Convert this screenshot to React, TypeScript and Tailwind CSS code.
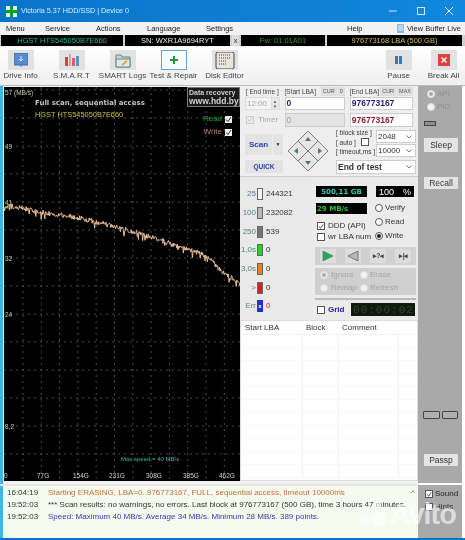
import React from 'react';

const FONT = "font-['Liberation_Sans',Arial,sans-serif]";
const WIDE = "font-['DejaVu_Sans',Verdana,sans-serif]";

// Write-speed trace: anchors read off the reference, noise is seeded so every run is the same
const ANCHORS: [number, number][] = [
  [0, 122], [4, 118], [36, 125], [76, 131], [116, 141], [136, 147], [156, 153],
  [176, 160], [196, 166], [206, 172], [216, 183], [226, 190], [236, 198],
];

function traceBase(x: number) {
  for (let i = 1; i < ANCHORS.length; i++) {
    const [x0, y0] = ANCHORS[i - 1];
    const [x1, y1] = ANCHORS[i];
    if (x <= x1) return y0 + ((y1 - y0) * (x - x0)) / (x1 - x0);
  }
  return 198;
}

function buildTrace() {
  let seed = 41;
  const pts: string[] = [];
  for (let x = 0; x <= 236; x += 0.6) {
    seed = (seed * 16807) % 2147483647;
    const n = (seed % 1000) / 1000 - 0.5;
    const spike = seed % 17 === 0 ? 5 : 0;
    pts.push(`${x.toFixed(1)},${(traceBase(x) + n * 5 + spike).toFixed(1)}`);
  }
  return pts.join(' ');
}

const Y_LABELS = [['57 (MB/s)', 1], ['49', 55], ['41', 111], ['32', 167], ['24', 223], ['8,2', 335]] as const;
const X_LABELS = [['0', 0], ['77G', 33], ['154G', 69], ['231G', 105], ['308G', 142], ['385G', 179], ['462G', 215]] as const;

function Chart() {
  const hLines = Array.from({ length: 14 }, (_, i) => 3 + i * 28);
  const vLines = Array.from({ length: 12 }, (_, i) => 19 + i * 18.3);
  return (
    <div className="relative h-[394px] w-[236px] shrink-0 bg-black">
      <svg width="236" height="394" className="absolute inset-0">
        {hLines.map(y => (
          <line key={y} x1="0" x2="236" y1={y} y2={y} stroke="#4c4c4c" strokeWidth="1" strokeDasharray="2 4" />
        ))}
        {vLines.map(x => (
          <line key={x} y1="0" y2="394" x1={x} x2={x} stroke="#4c4c4c" strokeWidth="1" strokeDasharray="2 4" />
        ))}
        <polyline points={buildTrace()} fill="none" stroke="#e6bc98" strokeWidth="1" />
      </svg>
      {Y_LABELS.map(([t, top]) => (
        <span key={t} className="absolute left-[1px] text-[6.5px] leading-[9px] text-[#c9c9a8]" style={{ top }}>{t}</span>
      ))}
      {X_LABELS.map(([t, left]) => (
        <span key={t} className="absolute bottom-[1px] text-[6.5px] leading-[9px] text-[#d8d8c0]" style={{ left }}>{t}</span>
      ))}
      <div className={`absolute left-[31px] top-[11px] whitespace-nowrap text-[7px] font-bold leading-[11px] text-[#c4c4c4] ${WIDE}`}>Full scan, sequential access</div>
      <div className="absolute left-[31px] top-[22px] whitespace-nowrap text-[7.4px] leading-[11px] text-[#cfc53e]">HGST HTS545050B7E660</div>
      <div className="absolute right-0 top-0 h-[20px] w-[53px] whitespace-nowrap border border-[#777] bg-[#1a1a1a] pl-[1px] font-bold leading-[9px] text-[#cfcfcf]">
        <div className="text-[7px]">Data recovery</div>
        <div className="text-[8.5px]">www.hdd.by</div>
      </div>
      <div className="absolute right-[8px] top-[27px] flex h-[10px] items-center gap-[3px] text-[8px] text-[#19a52b]">
        Read <ChartCheck />
      </div>
      <div className="absolute right-[8px] top-[40px] flex h-[10px] items-center gap-[3px] text-[8px] text-[#b5835f]">
        Write <ChartCheck />
      </div>
      <div className="absolute bottom-[17px] left-[117px] whitespace-nowrap text-[6px] text-[#38b6b0]">Max speed = 40 MB/s</div>
    </div>
  );
}

function ChartCheck() {
  return (
    <span className="flex h-[7px] w-[7px] items-center justify-center bg-[#eee]">
      <svg width="7" height="7" viewBox="0 0 7 7"><path d="M1 3.5 3 5.5 6 1" fill="none" stroke="#333" strokeWidth="1" /></svg>
    </span>
  );
}

function Check({ on = false, muted = false }: { on?: boolean; muted?: boolean }) {
  return (
    <span className={`flex h-[8px] w-[8px] shrink-0 items-center justify-center border ${muted ? 'border-[#ccc] bg-[#eee]' : 'border-[#555] bg-white'}`}>
      {on && <svg width="7" height="7" viewBox="0 0 7 7"><path d="M1 3.5 3 5.5 6 1" fill="none" stroke={muted ? '#bbb' : '#333'} strokeWidth="1" /></svg>}
    </span>
  );
}

function Radio({ on = false, muted = false }: { on?: boolean; muted?: boolean }) {
  return (
    <span className={`flex h-[8px] w-[8px] shrink-0 items-center justify-center rounded-full border ${muted ? 'border-[#ddd] bg-[#f3f3f3]' : 'border-[#555] bg-white'}`}>
      {on && <span className={`h-[4px] w-[4px] rounded-full ${muted ? 'bg-[#aaa]' : 'bg-[#222]'}`} />}
    </span>
  );
}

function TitleBar() {
  return (
    <div className="flex h-[22px] items-center bg-gradient-to-r from-[#0a74c9] to-[#1187de] pl-[6px] text-white">
      <svg width="11" height="11" viewBox="0 0 11 11">
        <rect width="11" height="11" fill="#dfeee0" />
        <path d="M4 0h3v4h4v3H7v4H4V7H0V4h4z" fill="#109a2c" />
      </svg>
      <span className="ml-[4px] whitespace-nowrap text-[7.2px] text-[#d8f0ff]">Victoria 5.37 HDD/SSD | Device 0</span>
      <div className="ml-auto mr-[12px] flex items-center gap-[20px]">
        <svg width="8" height="8" viewBox="0 0 8 8"><path d="M0 4h8" stroke="#cfe7fa" /></svg>
        <svg width="8" height="8" viewBox="0 0 8 8"><rect x=".5" y=".5" width="7" height="7" fill="none" stroke="#cfe7fa" /></svg>
        <svg width="8" height="8" viewBox="0 0 8 8"><path d="M0 0 8 8M8 0 0 8" stroke="#e8f4fd" /></svg>
      </div>
    </div>
  );
}

function MenuBar() {
  return (
    <div className="flex h-[13px] items-center whitespace-nowrap bg-[#f2f2f2] text-[7.5px] text-[#222]">
      <span className="ml-[6px] w-[39px]">Menu</span>
      <span className="w-[51px]">Service</span>
      <span className="w-[51px]">Actions</span>
      <span className="w-[59px]">Language</span>
      <span className="w-[141px]">Settings</span>
      <span className="w-[50px]">Help</span>
      <svg width="7" height="9" viewBox="0 0 7 9">
        <rect width="7" height="9" fill="#8db9dc" />
        <path d="M1 2h5M1 4h5M1 6h5" stroke="#e4f0f8" />
      </svg>
      <span className="ml-[3px]">View Buffer Live</span>
    </div>
  );
}

function DriveBar() {
  return (
    <div className="flex h-[11px] gap-[2px] whitespace-nowrap bg-[#cfcfcf] pl-[1px] pr-[3px] text-[7.5px] leading-[11px]">
      <div className="w-[122px] bg-black text-center text-[#20b89a]">HGST HTS545050B7E660</div>
      <div className="w-[105px] bg-black text-center text-[#e6e6e6]">SN: WXR1A9694RYT</div>
      <div className="w-[7px] bg-[#ddd] text-center text-[#333]">x</div>
      <div className="w-[84px] bg-black text-center text-[#2f9a2a]">Fw: 01.01A01</div>
      <div className="flex-1 bg-black text-center text-[#c6c04c]">976773168 LBA (500 GB)</div>
    </div>
  );
}

function ToolIcon({ name }: { name: string }) {
  if (name === 'info') return (
    <svg width="14" height="14" viewBox="0 0 14 14">
      <rect width="14" height="12" fill="#5b8bd0" stroke="#3f6bb0" />
      <path d="M7 3v5M5 6l2 2 2-2" stroke="#dbe9f8" fill="none" />
      <path d="M5 12h4l-2 2z" fill="#5b8bd0" />
    </svg>
  );
  if (name === 'smart') return (
    <svg width="16" height="14" viewBox="0 0 16 14">
      <rect x="1" y="4" width="3" height="9" fill="#d8433c" />
      <rect x="5" y="1" width="2" height="12" fill="#c9a0c0" />
      <rect x="8" y="5" width="3" height="8" fill="#e0605a" />
      <rect x="12" y="3" width="3" height="10" fill="#5b8fd6" />
    </svg>
  );
  if (name === 'logs') return (
    <svg width="16" height="15" viewBox="0 0 16 15">
      <path d="M1 2h5l1 2h8v10H1z" fill="#cdd9c9" stroke="#5d8a94" />
      <path d="M1 6h14v8H1z" fill="#dfeae6" stroke="#5d8a94" />
      <path d="M7 12l5-4" stroke="#e6a532" strokeWidth="2" />
    </svg>
  );
  if (name === 'disk') return (
    <svg width="20" height="17" viewBox="0 0 20 17">
      <rect x="1" y="0" width="18" height="17" rx="2" fill="#e8e4dc" stroke="#444" />
      <path d="M4 3h12M4 6h12M4 9h8M4 12h8" stroke="#444" strokeDasharray="1 1" />
    </svg>
  );
  if (name === 'pause') return (
    <svg width="7" height="8" viewBox="0 0 7 8">
      <rect width="3" height="8" fill="#3a78b8" />
      <rect x="4" width="3" height="8" fill="#3a78b8" />
    </svg>
  );
  return (
    <svg width="12" height="12" viewBox="0 0 12 12">
      <rect width="12" height="12" fill="#d9453d" />
      <path d="M3.500 3.500l5 5M8.500 3.500l-5 5" stroke="#fff" strokeWidth="1.4" />
    </svg>
  );
}

function ToolButton({ label, icon, active = false }: { label: string; icon: string; active?: boolean }) {
  return (
    <div className="flex w-[51px] shrink-0 flex-col items-center">
      <div className={`flex h-[20px] w-[26px] items-center justify-center ${active ? 'border border-[#63a4d4] bg-white' : 'bg-[#e2e2e2]'}`}>
        {icon === 'repair' ? (
          <svg width="8" height="8" viewBox="0 0 8 8"><path d="M3 0h2v3h3v2H5v3H3V5H0V3h3z" fill="#1f9a3a" /></svg>
        ) : <ToolIcon name={icon} />}
      </div>
      <span className="mt-[1px] whitespace-nowrap text-[8px] leading-[10px] text-[#444]">{label}</span>
    </div>
  );
}

function Toolbar() {
  return (
    <div className="flex h-[39px] items-start border-b border-[#bbb] bg-gradient-to-b from-white to-[#efefef] pt-[3px]">
      <div className="-ml-[5px]"><ToolButton label="Drive Info" icon="info" /></div>
      <ToolButton label="S.M.A.R.T" icon="smart" />
      <ToolButton label="SMART Logs" icon="logs" />
      <ToolButton label="Test & Repair" icon="repair" active />
      <ToolButton label="Disk Editor" icon="disk" />
      <div className="ml-[123px]"><ToolButton label="Pause" icon="pause" /></div>
      <div className="-ml-[6px]"><ToolButton label="Break All" icon="break" /></div>
    </div>
  );
}

function TinyTab({ children }: { children: React.ReactNode }) {
  return <span className="border border-[#ddd] bg-[#e0e0e0] px-[1px] text-[5.5px] leading-[7px] text-[#555]">{children}</span>;
}

function Arrows() {
  const cell = (cx: number, cy: number, tri: string) => (
    <g key={`${cx}-${cy}`}>
      <polygon points={`${cx},${cy - 10} ${cx + 10},${cy} ${cx},${cy + 10} ${cx - 10},${cy}`} fill="#e6e6e6" stroke="#666" strokeWidth="0.8" />
      <polygon points={tri} fill="#4f7d58" />
    </g>
  );
  return (
    <svg width="42" height="42" viewBox="0 0 42 42" className="shrink-0">
      {cell(21, 11, '21,7 24,11 18,11')}
      {cell(31, 21, '35,21 31,18 31,24')}
      {cell(21, 31, '21,35 24,31 18,31')}
      {cell(11, 21, '7,21 11,18 11,24')}
    </svg>
  );
}

function Select({ label, bold = false, className = '' }: { label: string; bold?: boolean; className?: string }) {
  return (
    <div className={`flex items-center justify-between border border-[#ccc] bg-white pl-[1px] pr-[3px] text-[#333] ${bold ? 'text-[8.5px] font-bold' : 'text-[8px]'} ${className}`}>
      {label}
      <svg width="6" height="4" viewBox="0 0 6 4"><path d="M.5.5 3 3 5.500.5" fill="none" stroke="#777" /></svg>
    </div>
  );
}

function ScanPanel() {
  return (
    <div className="h-[91px] border-b border-[#ccc] bg-[#eeeeee] px-[5px] pt-[1px] text-[#444]">
      <div className="flex gap-[5px]">
        <div className="w-[35px]">
          <div className="h-[9px] whitespace-nowrap text-center text-[6.5px] leading-[9px]">[ End time ]</div>
          <div className="mt-[1px] flex h-[13px] items-center justify-between border border-[#ddd] bg-[#f4f4f4] pl-[1px] text-[8px] text-[#aaa]">
            12:00
            <span className="flex h-full w-[8px] flex-col items-center justify-center border-l border-[#ddd] bg-[#e8e8e8] text-[4.5px] leading-[5px] text-[#666]"><span>▲</span><span>▼</span></span>
          </div>
          <div className="mt-[3px] flex h-[13px] items-center gap-[4px] pl-[1px] text-[8px] text-[#aaa]"><Check on muted /> Timer</div>
        </div>
        <div className="w-[61px]">
          <div className="flex h-[9px] items-center gap-[1px] whitespace-nowrap text-[6.5px]"><span className="mr-auto">[Start LBA]</span><TinyTab>CUR</TinyTab><TinyTab>0</TinyTab></div>
          <div className="mt-[1px] flex h-[13px] items-center border border-[#ccc] bg-white pl-[1px] text-[8.5px] font-bold text-[#1e1e7a]">0</div>
          <div className="mt-[3px] flex h-[14px] items-center border border-[#ccc] bg-[#e4e4e4] pl-[1px] text-[8.5px] text-[#999]">0</div>
        </div>
        <div className="w-[64px]">
          <div className="flex h-[9px] items-center gap-[1px] whitespace-nowrap text-[6.5px]"><span className="mr-auto">[End LBA]</span><TinyTab>CUR</TinyTab><TinyTab>MAX</TinyTab></div>
          <div className="mt-[1px] flex h-[13px] items-center border border-[#ccc] bg-white pl-[1px] text-[8.5px] font-bold text-[#1e1e7a]">976773167</div>
          <div className="mt-[3px] flex h-[14px] items-center border border-[#ccc] bg-white pl-[1px] text-[8.5px] font-bold text-[#8c1c2c]">976773167</div>
        </div>
      </div>
      <div className="mt-[3px] flex">
        <div className="w-[38px] shrink-0 pt-[4px]">
          <div className="flex gap-[1px]">
            <div className="flex h-[21px] w-[27px] items-center justify-center bg-[#e3e3e3] text-[8px] font-bold text-[#2a3fb0]">Scan</div>
            <div className="flex h-[21px] w-[10px] items-center justify-center bg-[#e3e3e3] text-[5px] text-[#222]">▼</div>
          </div>
          <div className="mt-[5px] flex h-[13px] items-center justify-center bg-[#e3e3e3] text-[6.5px] font-bold text-[#2a3fb0]">QUICK</div>
        </div>
        <div className="ml-[4px]"><Arrows /></div>
        <div className="ml-[7px] w-[80px] shrink-0">
          <div className="flex">
            <div className="-mt-[2px] w-[39px] shrink-0 text-[6.5px] leading-[9.5px] text-[#333]">
              <div className="whitespace-nowrap">[ block size ]</div>
              <div className="flex h-[9.5px] items-center gap-[5px] whitespace-nowrap">[ auto ] <Check /></div>
              <div className="whitespace-nowrap">[ timeout,ms ]</div>
            </div>
            <div className="ml-auto w-[40px] shrink-0">
              <Select label="2048" className="h-[13px]" />
              <Select label="10000" className="mt-[1px] h-[13px]" />
            </div>
          </div>
          <Select label="End of test" bold className="mt-[3px] h-[14px]" />
        </div>
      </div>
    </div>
  );
}

const STATS = [
  ['25', '#f4f4f4', '244321', '#4a7a90'],
  ['100', '#b8b8b8', '232082', '#4a8a90'],
  ['250', '#777', '539', '#4f8a70'],
  ['1,0s', '#22d322', '0', '#4a8a70'],
  ['3,0s', '#e8822a', '0', '#4a8a70'],
  ['>', '#d81e1e', '0', '#777'],
] as const;

function StatsColumn() {
  return (
    <div className="w-[72px] shrink-0 pt-[8px] text-[8px]">
      {STATS.map(([label, color, val, tone]) => (
        <div key={label} className="flex h-[18.7px] items-center">
          <span className="w-[16px] whitespace-nowrap text-right" style={{ color: tone }}>{label}</span>
          <span className="ml-[1px] h-[12px] w-[6px] border border-[#666]" style={{ background: color }} />
          <span className="ml-[3px] text-[#333]">{val}</span>
        </div>
      ))}
      <div className="flex h-[18.7px] items-center">
        <span className="w-[16px] text-right text-[#5a8a90]">Err</span>
        <span className="ml-[1px] flex h-[12px] w-[6px] items-center justify-center bg-[#2233cc] text-[6px] font-bold leading-none text-white">x</span>
        <span className="ml-[3px] text-[#e02020]">0</span>
      </div>
    </div>
  );
}

function TransportButton({ children }: { children: React.ReactNode }) {
  return <div className="flex h-[14px] w-[16px] items-center justify-center bg-[#dcdcdc]">{children}</div>;
}

function ControlColumn() {
  return (
    <div className="flex-1 bg-[#ebebeb] pl-[3px] pr-[2px] pt-[9px] text-[8px] leading-[10px] text-[#333]">
      <div className="flex h-[58px]">
        <div className="w-[57px] shrink-0 pl-[1px]">
          <div className={`flex h-[11px] w-[51px] items-center justify-center bg-black text-[7px] font-bold text-[#35c7b5] ${WIDE}`}>500,11 GB</div>
          <div className={`mt-[6px] flex h-[11px] w-[51px] items-center bg-black pl-[1px] text-[7px] font-bold text-[#2fc02f] ${WIDE}`}>29 MB/s</div>
          <div className="mt-[7px] flex h-[10px] items-center gap-[3px] whitespace-nowrap pl-[1px]"><Check on /> DDD (API)</div>
          <div className="mt-[1px] flex h-[10px] items-center gap-[3px] whitespace-nowrap pl-[1px]"><Check /> wr LBA num</div>
        </div>
        <div className="ml-[3px] flex-1">
          <div className="ml-[1px] flex h-[11px] w-[38px] items-center justify-between bg-black px-[3px] text-[9px] text-white"><span>100</span><span>%</span></div>
          <div className="mt-[6px] flex h-[10px] items-center gap-[2px]"><Radio /> Verify</div>
          <div className="mt-[4px] flex h-[10px] items-center gap-[2px]"><Radio /> Read</div>
          <div className="mt-[4px] flex h-[10px] items-center gap-[2px]"><Radio on /> Write</div>
        </div>
      </div>
      <div className="mt-[3px] flex h-[18px] items-center justify-around bg-[#d0d0d0]">
        <TransportButton><svg width="12" height="10" viewBox="0 0 12 10"><path d="M1 0 11 5 1 10z" fill="#25b04a" stroke="#555" strokeWidth=".5" /></svg></TransportButton>
        <TransportButton><svg width="12" height="10" viewBox="0 0 12 10"><path d="M11 0 1 5 11 10z" fill="#b8b8b8" stroke="#555" strokeWidth=".7" /></svg></TransportButton>
        <TransportButton><span className="whitespace-nowrap text-[7px] font-bold tracking-[-0.5px] text-[#444]">▸?◂</span></TransportButton>
        <TransportButton><span className="whitespace-nowrap text-[7px] font-bold tracking-[-0.5px] text-[#444]">▸|◂</span></TransportButton>
      </div>
      <div className="mt-[3px] grid h-[27px] grid-cols-[40px_1fr] content-center gap-y-[3px] bg-[#cfcfcf] pl-[5px] text-[8px] text-[#a4a4a4]">
        <div className="flex h-[10px] items-center gap-[3px]"><Radio on muted /> Ignore</div>
        <div className="flex h-[10px] items-center gap-[2px]"><Radio muted /> Erase</div>
        <div className="flex h-[10px] items-center gap-[3px]"><Radio muted /> Remap</div>
        <div className="flex h-[10px] items-center gap-[2px]"><Radio muted /> Refresh</div>
      </div>
      <div className="mt-[3px] h-[2px] bg-[#bbb]" />
      <div className="mt-[3px] flex items-center pl-[2px]">
        <Check />
        <span className="ml-[3px] text-[8px] font-bold text-[#23238c]">Grid</span>
        <div className="ml-[7px] flex h-[13px] w-[64px] items-center justify-center bg-[#101a10] font-['Liberation_Mono',monospace] text-[11px] tracking-[1px] text-[#2e4a2a]">00:00:02</div>
      </div>
    </div>
  );
}

function ResultTable() {
  const rows = Array.from({ length: 11 }, (_, i) => i);
  return (
    <div className="mb-[3px] flex-1 overflow-hidden border border-[#ddd] bg-white">
      <div className="grid h-[14px] grid-cols-[62px_36px_60px_1fr] items-center border-b border-[#f2f2f2] text-[8px] text-[#333]">
        <span className="pl-[4px]">Start LBA</span>
        <span className="pl-[3px]">Block</span>
        <span className="pl-[3px]">Comment</span>
      </div>
      {rows.map(r => (
        <div key={r} className="grid h-[13px] grid-cols-[62px_36px_60px_1fr] border-b border-[#f9f9f9]">
          <span className="border-r border-[#f2f2f2]" />
          <span className="border-r border-[#f2f2f2]" />
          <span className="border-r border-[#f2f2f2]" />
        </div>
      ))}
    </div>
  );
}

function LogPanel() {
  return (
    <div className="relative flex-1 border-l-[3px] border-[#3fb4ee] bg-[#f6faef] pl-[4px] pt-[1px] text-[8px] leading-[12px]">
      {[
        ['16:04:19', 'Starting ERASING, LBA=0..976773167, FULL, sequential access, timeout 10000ms', 'text-[#c0703c]'],
        ['19:52:03', '*** Scan results: no warnings, no errors. Last block at 976773167 (500 GB), time 3 hours 47 minutes.', 'text-[#333]'],
        ['19:52:03', 'Speed: Maximum 40 MB/s. Average 34 MB/s. Minimum 28 MB/s. 389 points.', 'text-[#3535b5]'],
      ].map(([time, msg, tone]) => (
        <div key={msg} className="flex whitespace-nowrap">
          <span className="w-[41px] shrink-0 text-[#333]">{time}</span>
          <span className={`${tone} w-[362px] overflow-hidden`}>{msg}</span>
        </div>
      ))}
      <span className="absolute right-[3px] top-[1px] text-[8px] text-[#555]">^</span>
    </div>
  );
}

function SideButton({ label, className = '' }: { label: string; className?: string }) {
  return <div className={`ml-[6px] flex w-[34px] items-center justify-center bg-[#e4e4e4] text-[8.5px] text-[#333] ${className}`}>{label}</div>;
}

function SidePanel() {
  return (
    <div className="flex w-[44px] shrink-0 flex-col bg-[#a9a9a9] pt-[3px] text-[8px] leading-[10px]">
      <div className="ml-[9px] flex h-[10px] items-center gap-[2px] text-[#8f8f8f]"><Radio on muted /> API</div>
      <div className="ml-[9px] mt-[3px] flex h-[10px] items-center gap-[2px] text-[#8f8f8f]"><Radio muted /> PIO</div>
      <div className="ml-[6px] mt-[9px] h-[5px] w-[12px] border border-[#444] bg-[#8e8e8e]" />
      <SideButton label="Sleep" className="mt-[12px] h-[14px]" />
      <SideButton label="Recall" className="mt-[25px] h-[12px]" />
      <div className="ml-[5px] mt-[222px] flex gap-[2px]">
        <span className="h-[8px] w-[17px] rounded-[1px] border border-[#444] bg-[#b0b0b0]" />
        <span className="h-[8px] w-[16px] rounded-[1px] border border-[#444] bg-[#b0b0b0]" />
      </div>
      <SideButton label="Passp" className="mt-[35px] h-[12px]" />
      <div className="mt-[17px] h-[2px] shrink-0 bg-white" />
      <div className="ml-[7px] mt-[4px] flex h-[10px] items-center gap-[2px] text-[#222]"><Check on /> Sound</div>
      <div className="ml-[7px] mt-[3px] flex h-[10px] items-center gap-[2px] text-[#333]"><Check /> Hints</div>
    </div>
  );
}

function AvitoMark() {
  return (
    <div className="pointer-events-none absolute bottom-[11px] right-[9px] flex items-center opacity-60">
      <svg width="30" height="26" viewBox="0 0 30 26" className="mr-[1px]">
        <circle cx="20" cy="18" r="7.500" fill="#fff" />
        <circle cx="6" cy="19" r="4.500" fill="#fff" />
        <circle cx="19" cy="4" r="3.500" fill="#fff" />
        <circle cx="7" cy="7" r="2.500" fill="#fff" />
      </svg>
      <span className="text-[29px] font-bold leading-[30px] tracking-[-1px] text-white">Avito</span>
    </div>
  );
}

export default function App() {
  return (
    <div className={`relative h-[540px] w-[465px] overflow-hidden bg-[#0b76c8] blur-[0.3px] ${FONT}`}>
      <TitleBar />
      <div className="h-[516px] bg-white">
        <MenuBar />
        <DriveBar />
        <div className="h-[1px] bg-[#f4f4f4]" />
        <Toolbar />
        <div className="flex h-[452px] pr-[3px]">
          <div className="flex w-[418px] shrink-0 flex-col">
            <div className="flex h-[398px] border-l-[3px] border-[#3fb4ee] bg-[#f2f2f2]">
              <div className="ml-[1px] mt-[1px]"><Chart /></div>
              <div className="flex min-w-0 flex-1 flex-col">
                <ScanPanel />
                <div className="flex h-[143px] shrink-0 bg-[#e9e9e9]">
                  <StatsColumn />
                  <ControlColumn />
                </div>
                <ResultTable />
              </div>
            </div>
            <div className="h-[2px] bg-[#e6e6e6]" />
            <LogPanel />
          </div>
          <SidePanel />
        </div>
      </div>
      <AvitoMark />
    </div>
  );
}
